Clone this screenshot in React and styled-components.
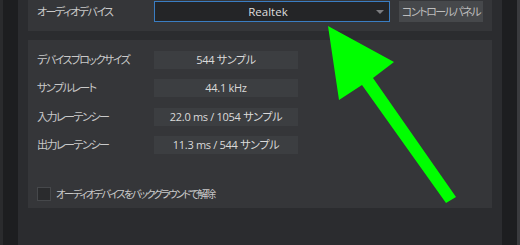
import React from "react"
import styled, { createGlobalStyle } from "styled-components"

const GlobalStyle = createGlobalStyle`
  html, body {
    margin: 0;
    padding: 0;
    background: #2b2c2f;
    overflow: hidden;
  }
  body {
    font-family: "Open Sans", "Noto Sans CJK JP", sans-serif;
    font-feature-settings: "palt";
  }
`

const Page = styled.div`
  position: relative;
  display: flex;
  width: 520px;
  height: 245px;
  background: #2b2c2f;
`

const Edge = styled.div`
  width: ${(p) => p.$w}px;
  flex-shrink: 0;
  background: ${(p) => p.$bg};
`

const Content = styled.div`
  flex: 1;
  display: flex;
  flex-direction: column;
  padding: 0 10px;
`

const Panel = styled.div`
  background: ${(p) => p.$bg || "#353639"};
`

const DeviceBar = styled(Panel)`
  height: 31px;
  box-sizing: border-box;
  padding: 1px 0 0 9px;
  display: flex;
  align-items: flex-start;
`

const Label = styled.span`
  width: ${(p) => p.$w || 117}px;
  flex-shrink: 0;
  font-size: ${(p) => p.$fs || 11}px;
  letter-spacing: ${(p) => p.$ls || -1.5}px;
  color: #c9c9c9;
  line-height: ${(p) => p.$lh || 18}px;
  white-space: nowrap;
`

const Select = styled.div`
  position: relative;
  width: 236px;
  height: 21px;
  box-sizing: border-box;
  border: 1px solid #3a7dc2;
  background: #242527;
  color: #dedede;
  font-size: 11.5px;
  line-height: 19px;
  text-align: center;
  padding-right: 8px;

  &::after {
    content: "";
    position: absolute;
    right: 5px;
    top: 8px;
    border-left: 4px solid transparent;
    border-right: 4px solid transparent;
    border-top: 4px solid #7c7d80;
  }
`

const Button = styled.div`
  margin-left: 9px;
  width: 84px;
  height: 21px;
  overflow: hidden;
  background: #46484b;
  color: #bdbdbd;
  font-size: 11px;
  letter-spacing: -1.5px;
  line-height: 21px;
  text-align: center;
  white-space: nowrap;
`

const MainPanel = styled(Panel)`
  margin-top: 9px;
  height: 168px;
  box-sizing: border-box;
  padding: 11px 0 0 9px;
  display: flex;
  flex-direction: column;
`

const Rows = styled.div`
  display: flex;
  flex-direction: column;
  gap: 10.4px;
`

const Row = styled.div`
  display: flex;
  align-items: center;
  height: 18px;
`

const Value = styled.div`
  width: 144px;
  height: 18px;
  background: #3c3e41;
  color: #dadada;
  font-size: 11px;
  letter-spacing: -0.3px;
  line-height: 18px;
  text-align: center;
  white-space: nowrap;
`

const CheckRow = styled.label`
  display: flex;
  align-items: center;
  margin-top: 31px;
  gap: 5px;
`

const Box = styled.span`
  width: 14px;
  height: 14px;
  box-sizing: border-box;
  border: 1px solid #46484b;
  background: #2a2b2d;
`

const Arrow = styled.svg`
  position: absolute;
  left: 0;
  top: 0;
  pointer-events: none;
`

const rows = [
  ["デバイスブロックサイズ", "544 サンプル"],
  ["サンプルレート", "44.1 kHz"],
  ["入力レーテンシー", "22.0 ms / 1054 サンプル"],
  ["出力レーテンシー", "11.3 ms / 544 サンプル"],
]

const App = () => {
  return (
    <Page>
      <GlobalStyle />
      <Edge $w={3} $bg="#2a2b2d" />
      <Edge $w={15} $bg="#1d1e20" />
      <Content>
        <DeviceBar>
          <Label $lh={22}>オーディオデバイス</Label>
          <Select>Realtek</Select>
          <Button>コントロールパネル</Button>
        </DeviceBar>
        <MainPanel>
          <Rows>
            {rows.map(([label, value]) => (
              <Row key={label}>
                <Label>{label}</Label>
                <Value>{value}</Value>
              </Row>
            ))}
          </Rows>
          <CheckRow>
            <Box />
            <Label $w={240} $fs={10.5} $ls={-1.9}>
              オーディオデバイスをバックグラウンドで解除
            </Label>
          </CheckRow>
        </MainPanel>
      </Content>
      <Edge $w={15} $bg="#1d1e20" />
      <Edge $w={3} $bg="#3a3b3e" />
      <Arrow width="520" height="245" viewBox="0 0 520 245">
        <polygon
          points="328,26 394,62 373,78 456,197 446,203 362,85 339,100"
          fill="#00ff00"
        />
      </Arrow>
    </Page>
  )
}

export default App
